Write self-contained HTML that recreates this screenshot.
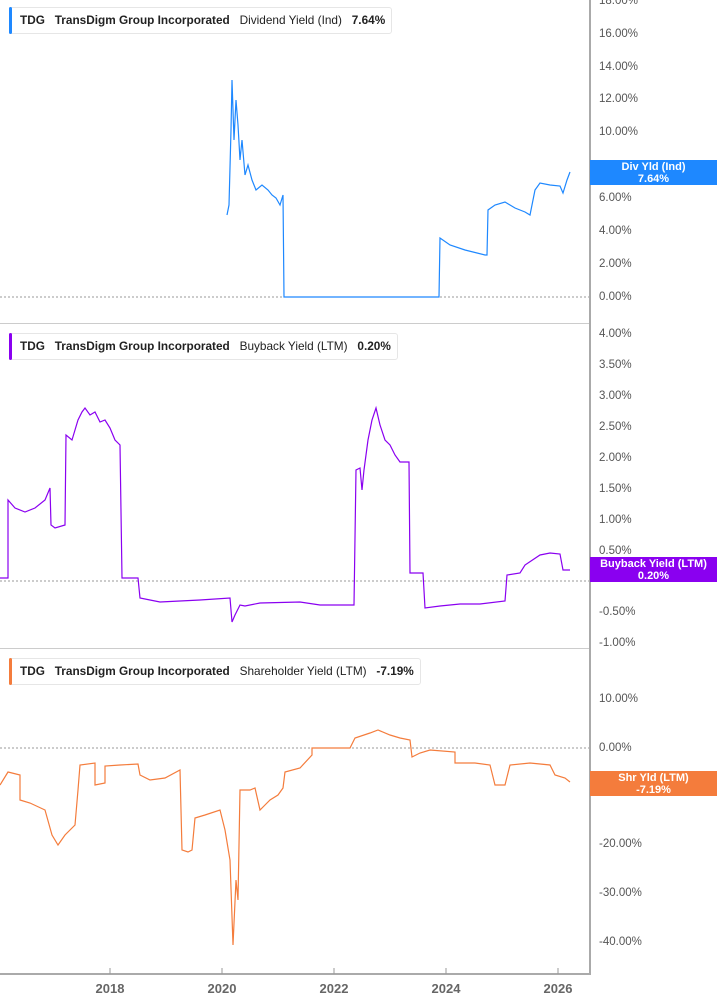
<!DOCTYPE html>
<html><head><style>
body{margin:0;width:717px;height:1005px;background:#fff;font-family:"Liberation Sans",sans-serif;overflow:hidden;position:relative}
.leg{position:absolute;left:9px;height:25px;border:1px solid #e6e6e6;border-radius:3px;background:#fff;font-size:11.8px;line-height:25px;color:#222;padding:0 6px 0 10px;white-space:nowrap}
.leg b{font-weight:bold}
.ax{position:absolute;left:599px;font-size:11.5px;color:#555}
.lab{position:absolute;left:590px;width:127px;height:25px;color:#fff;font-size:11px;font-weight:bold;text-align:center;line-height:12px;padding-top:1px;box-sizing:border-box}
.yr{position:absolute;top:981px;font-size:13px;font-weight:bold;color:#666;width:40px;text-align:center}
</style></head><body>
<svg width="717" height="1005" style="position:absolute;left:0;top:0">
<g stroke="#999" stroke-dasharray="2,2" stroke-width="1"><line x1="0" y1="297" x2="590" y2="297"/><line x1="0" y1="581" x2="590" y2="581"/><line x1="0" y1="748" x2="590" y2="748"/></g>
<g stroke="#ccc"><line x1="0" y1="323.5" x2="590" y2="323.5"/><line x1="0" y1="648.5" x2="590" y2="648.5"/></g>
<line x1="590" y1="0" x2="590" y2="974" stroke="#aaa" stroke-width="2"/>
<line x1="0" y1="974" x2="591" y2="974" stroke="#aaa" stroke-width="2"/>
<g stroke="#999"><line x1="110" y1="974" x2="110" y2="968"/><line x1="222" y1="974" x2="222" y2="968"/><line x1="334" y1="974" x2="334" y2="968"/><line x1="446" y1="974" x2="446" y2="968"/><line x1="558" y1="974" x2="558" y2="968"/></g>
<polyline fill="none" stroke="#1e88ff" stroke-width="1.2" points="227,215 229,205 231,130 232,80 234,140 236,100 238,125 240,160 242,140 245,175 248,165 252,180 256,190 262,185 268,190 272,195 276,198 280,205 283,195 284,297 439,297 440,238 450,245 465,250 485,255 487,255 488,210 495,205 505,202 515,208 525,212 530,215 535,190 540,183 550,185 560,186 563,193 567,180 570,172"/>
<polyline fill="none" stroke="#8a00f0" stroke-width="1.2" points="0,578 8,578 8,500 15,508 25,512 35,508 45,500 50,488 51,525 55,528 65,525 66,435 72,440 78,420 82,412 85,408 90,415 95,412 100,422 105,420 110,428 115,440 120,445 122,578 138,578 140,598 150,600 160,602 200,600 230,598 232,622 235,615 240,605 245,606 260,603 300,602 320,605 354,605 356,470 360,468 362,490 364,470 368,440 372,420 376,408 380,425 385,440 390,445 395,455 400,462 409,462 410,573 423,573 425,608 440,606 460,604 480,604 505,601 507,575 520,573 525,565 540,555 550,553 560,554 563,570 570,570"/>
<polyline fill="none" stroke="#f47c3c" stroke-width="1.2" points="0,785 8,772 20,775 20,800 30,803 45,810 52,835 58,845 65,835 75,825 78,790 80,765 95,763 95,785 105,783 105,766 120,765 138,764 140,775 150,780 165,778 180,770 182,850 188,852 192,850 195,818 205,815 220,810 225,830 230,860 233,945 236,880 238,900 240,790 250,790 255,788 260,810 265,805 270,800 278,795 283,788 285,772 300,768 312,755 312,748 350,748 355,738 370,733 378,730 390,735 400,738 410,740 412,757 420,753 430,750 455,752 455,763 475,763 490,765 495,785 505,785 510,765 530,763 550,765 555,775 565,778 570,782"/>
</svg>
<div class="leg" style="top:7px"><b>TDG</b>&nbsp;&nbsp; <b>TransDigm Group Incorporated</b>&nbsp;&nbsp; Dividend Yield (Ind)&nbsp;&nbsp; <b>7.64%</b></div>
<div class="leg" style="top:333px"><b>TDG</b>&nbsp;&nbsp; <b>TransDigm Group Incorporated</b>&nbsp;&nbsp; Buyback Yield (LTM)&nbsp;&nbsp; <b>0.20%</b></div>
<div class="leg" style="top:658px"><b>TDG</b>&nbsp;&nbsp; <b>TransDigm Group Incorporated</b>&nbsp;&nbsp; Shareholder Yield (LTM)&nbsp;&nbsp; <b>-7.19%</b></div>
<div style="position:absolute;left:9px;top:7px;width:3px;height:27px;background:#1e88ff;border-radius:2px"></div>
<div style="position:absolute;left:9px;top:333px;width:3px;height:27px;background:#8a00f0;border-radius:2px"></div>
<div style="position:absolute;left:9px;top:658px;width:3px;height:27px;background:#f47c3c;border-radius:2px"></div>
<div class="ax" style="top:-5px">18.00%</div>
<div class="ax" style="top:28px">16.00%</div>
<div class="ax" style="top:61px">14.00%</div>
<div class="ax" style="top:93px">12.00%</div>
<div class="ax" style="top:126px">10.00%</div>
<div class="ax" style="top:192px">6.00%</div>
<div class="ax" style="top:225px">4.00%</div>
<div class="ax" style="top:258px">2.00%</div>
<div class="ax" style="top:291px">0.00%</div>
<div class="ax" style="top:328px">4.00%</div>
<div class="ax" style="top:359px">3.50%</div>
<div class="ax" style="top:390px">3.00%</div>
<div class="ax" style="top:421px">2.50%</div>
<div class="ax" style="top:452px">2.00%</div>
<div class="ax" style="top:483px">1.50%</div>
<div class="ax" style="top:514px">1.00%</div>
<div class="ax" style="top:545px">0.50%</div>
<div class="ax" style="top:606px">-0.50%</div>
<div class="ax" style="top:637px">-1.00%</div>
<div class="ax" style="top:693px">10.00%</div>
<div class="ax" style="top:742px">0.00%</div>
<div class="ax" style="top:838px">-20.00%</div>
<div class="ax" style="top:887px">-30.00%</div>
<div class="ax" style="top:936px">-40.00%</div>
<div class="lab" style="top:160px;background:#1e88ff">Div Yld (Ind)<br>7.64%</div>
<div class="lab" style="top:557px;background:#8a00f0">Buyback Yield (LTM)<br>0.20%</div>
<div class="lab" style="top:771px;background:#f47c3c">Shr Yld (LTM)<br>-7.19%</div>
<div class="yr" style="left:90px">2018</div>
<div class="yr" style="left:202px">2020</div>
<div class="yr" style="left:314px">2022</div>
<div class="yr" style="left:426px">2024</div>
<div class="yr" style="left:538px">2026</div>
</body></html>
